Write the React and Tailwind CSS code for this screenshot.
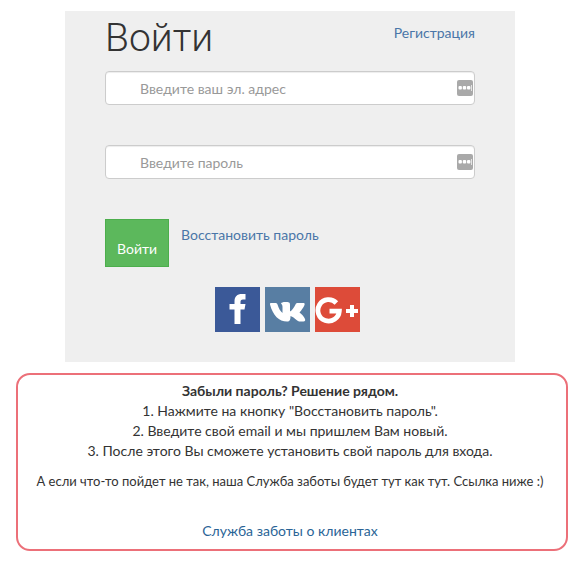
import React, { useState } from 'react';

const HELP_STEPS = [
    '1. Нажмите на кнопку "Восстановить пароль".',
    '2. Введите свой email и мы пришлем Вам новый.',
    '3. После этого Вы сможете установить свой пароль для входа.',
];

// Small keypad badge at the right edge of a field
const AutofillBadge = () => (
    <svg viewBox="0 0 16 16" className="absolute top-[9px] right-0.5 size-4" aria-hidden="true">
        <rect width="16" height="16" rx="2" fill="#a9a9a9" />
        <rect x="1.5" y="6" width="3.4" height="3.4" rx="1" fill="#fff" />
        <rect x="5.8" y="6" width="3.4" height="3.4" rx="1" fill="#fff" />
        <rect x="10" y="6" width="3.4" height="3.4" rx="1" fill="#fff" />
        <rect x="14" y="5" width="1" height="6" fill="#e4e4e4" />
    </svg>
);

const Field = ({ type, label, value, onChange }) => (
    <div className="relative">
        <input
            type={type}
            aria-label={label}
            placeholder={label}
            value={value}
            onChange={(e) => onChange(e.target.value)}
            className="block h-[34px] w-full rounded border border-[#cccccc] bg-white pr-6 pl-[34px] text-sm text-[#555555] shadow-[inset_0_1px_1px_rgba(0,0,0,0.075)] placeholder:text-[#999999]"
        />
        <AutofillBadge />
    </div>
);

const SocialLinks = () => (
    <div className="mt-5 flex justify-center gap-[5px] pr-[5px]">
        <a href="#facebook" aria-label="Facebook" className="size-[45px] bg-[#3b5998]">
            <svg viewBox="0 0 45 45" fill="#fff">
                <path d="M19.500 37V22.500h-5V17h5v-2.500c0-5 2.500-7.500 7.500-7.500h3.500v5.500H28c-2 0-2.500 1-2.500 2.500v2h5l-1 5.500h-4V37z" />
            </svg>
        </a>
        <a href="#vk" aria-label="VK" className="size-[45px] bg-[#587ea3]">
            <svg viewBox="0 0 45 45" fill="#fff">
                <path d="M22 34.500c-8 0-14-6-17-17-.3-1 .3-1.500 1-1.500h4.500c1 0 1.600.5 2 1.500 1.200 4 3 7 5 8.500V20c0-1.500-.5-2.500-1.500-3.500.5-1 2-1.500 4-1.500 4 0 5 0 5 3v6.500c2-1 4-4 5.500-7 .5-1 1-1.500 2-1.500H38c1.500 0 2 .5 1.500 2-1 2.500-3 5-5 7.500 2.500 2 4.500 4 5.500 6.500.5 1.500 0 2.500-1.500 2.500H34c-2.500-1-4.500-4-8.500-5.500 0 3.500-.5 5.500-3.500 5.500z" />
            </svg>
        </a>
        <a href="#google" aria-label="Google+" className="size-[45px] bg-[#dd4b39]">
            <svg viewBox="0 0 45 45" fill="none" stroke="#fff" strokeWidth="4.8">
                <path d="M21.400 16A10.700 10.700 0 1 0 24.300 24.200H14.500" />
                <path d="M37 18v12M31 24h12" strokeWidth="4" />
            </svg>
        </a>
    </div>
);

const App = () => {
    const [email, setEmail] = useState('');
    const [password, setPassword] = useState('');

    return (
        <main className="pt-[11px] pl-1 font-['Lato',sans-serif] text-sm text-[#333333]">
            <form
                onSubmit={(e) => e.preventDefault()}
                className="mx-auto max-w-[450px] bg-[#efefef] px-10 pt-2 pb-[30px]"
            >
                <div className="mb-3 flex h-10 items-start justify-between">
                    <h1 className="font-['Roboto',sans-serif] text-[39px] leading-[38px] font-light">Войти</h1>
                    <a href="#register" className="mt-1 leading-5 text-[#4a76a8]">Регистрация</a>
                </div>

                <div className="flex flex-col gap-10">
                    <Field type="email" label="Введите ваш эл. адрес" value={email} onChange={setEmail} />
                    <Field type="password" label="Введите пароль" value={password} onChange={setPassword} />
                </div>

                <div className="mt-10 flex items-start gap-3">
                    <button type="submit" className="border border-[#4cae4c] bg-[#5cb85c] px-[11px] pt-[19px] pb-[7px] leading-5 text-white">
                        Войти
                    </button>
                    <a href="#restore" className="mt-[6px] leading-5 text-[#4a76a8]">Восстановить пароль</a>
                </div>

                <SocialLinks />
            </form>

            <section className="mt-[11px] mr-2 ml-3 rounded-[14px] border-2 border-[#ec7079] pt-[6px] pr-3 pb-2 pl-2 text-center leading-5">
                <p className="font-bold">Забыли пароль? Решение рядом.</p>
                {HELP_STEPS.map((step) => (
                    <p key={step}>{step}</p>
                ))}
                <p className="mt-[10px] text-[13px] leading-5">
                    А если что-то пойдет не так, наша Служба заботы будет тут как тут. Ссылка ниже :)
                </p>
                <p className="mt-[30px]">
                    <a href="#support" className="text-[#2a6496]">Служба заботы о клиентах</a>
                </p>
            </section>
        </main>
    );
};

export default App;
